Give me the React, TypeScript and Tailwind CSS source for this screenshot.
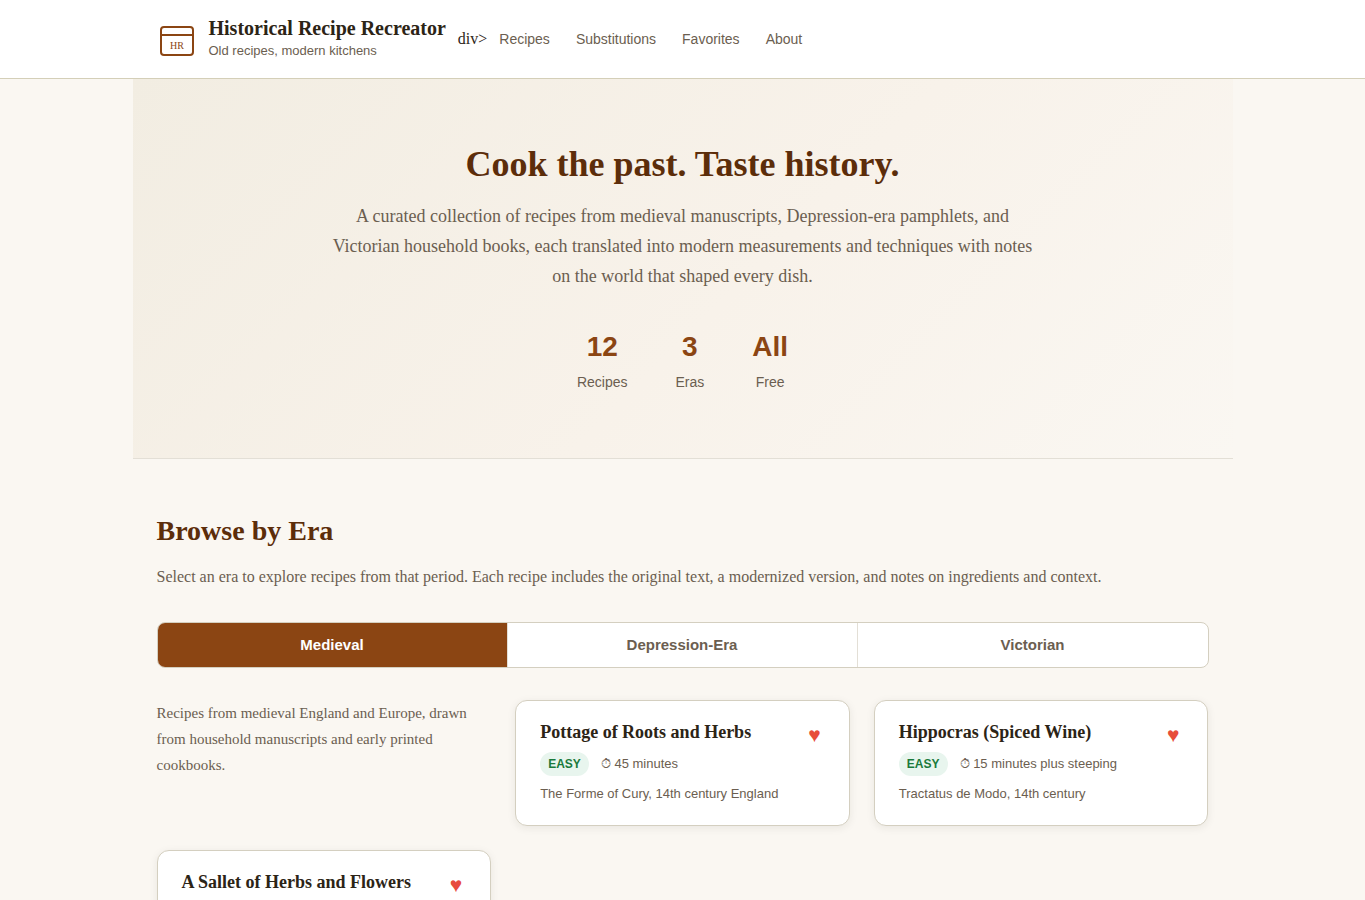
/**
 * Historical Recipe Recreator home page.
 *
 * Header, hero and the era browser with its recipe cards.
 */
import { useState } from 'react';

type Recipe = {
  title: string;
  difficulty: string;
  time: string;
  source: string;
};

const NAV_LINKS = ['Recipes', 'Substitutions', 'Favorites', 'About'];

const STATS = [
  { value: '12', label: 'Recipes' },
  { value: '3', label: 'Eras' },
  { value: 'All', label: 'Free' },
];

const ERAS = ['Medieval', 'Depression-Era', 'Victorian'];

const RECIPES: Recipe[] = [
  {
    title: 'Pottage of Roots and Herbs',
    difficulty: 'EASY',
    time: '45 minutes',
    source: 'The Forme of Cury, 14th century England',
  },
  {
    title: 'Hippocras (Spiced Wine)',
    difficulty: 'EASY',
    time: '15 minutes plus steeping',
    source: 'Tractatus de Modo, 14th century',
  },
  {
    title: 'A Sallet of Herbs and Flowers',
    difficulty: 'EASY',
    time: '20 minutes',
    source: 'The Forme of Cury, 14th century England',
  },
];

function Logo() {
  return (
    <svg width="40" height="40" viewBox="0 0 40 40" fill="none" aria-hidden="true">
      <rect x="4" y="8" width="32" height="28" rx="3" stroke="#8b4513" strokeWidth="2" />
      <path d="M4 16H36" stroke="#8b4513" strokeWidth="2" />
      <text
        x="20"
        y="30"
        textAnchor="middle"
        fontSize="10"
        fill="#8b4513"
        className="font-['Liberation_Serif',serif]"
      >
        HR
      </text>
    </svg>
  );
}

function Header() {
  return (
    <header className="border-b border-[#d4cfb8] bg-white">
      <div className="mx-auto flex max-w-[1100px] items-center gap-3 px-6 py-4">
        <Logo />
        <div>
          <div className="text-[20px] leading-[24px] font-bold">Historical Recipe Recreator</div>
          <div className="font-['Liberation_Sans',sans-serif] text-[13px] leading-[22px] text-[#6b5e50]">
            Old recipes, modern kitchens
          </div>
        </div>
        <span>div&gt;</span>
        <nav className="flex gap-[26px] font-['Liberation_Sans',sans-serif] text-[14px] text-[#6b5e50]">
          {NAV_LINKS.map((label) => (
            <a key={label} href={`#${label.toLowerCase()}`}>
              {label}
            </a>
          ))}
        </nav>
      </div>
    </header>
  );
}

function Hero() {
  return (
    <section className="mx-auto max-w-[1100px] border-b border-[#e3dfd6] bg-[linear-gradient(135deg,#f2ede2_0%,#f8f2ea_55%,#faf7f2_100%)] px-6 py-16 text-center">
      <h1 className="mb-[15px] text-[36px] leading-[43px] font-bold text-[#5c2d0a]">
        Cook the past. Taste history.
      </h1>
      <p className="mx-auto mb-8 max-w-[704px] text-[18px] leading-[30px] text-[#6b5e50]">
        A curated collection of recipes from medieval manuscripts, Depression-era pamphlets, and
        Victorian household books, each translated into modern measurements and techniques with
        notes on the world that shaped every dish.
      </p>
      <div className="flex justify-center gap-12 font-['Liberation_Sans',sans-serif]">
        {STATS.map(({ value, label }) => (
          <div key={label}>
            <div className="text-[28px] leading-[48px] font-bold text-[#8b4513]">{value}</div>
            <div className="text-[14px] leading-[23px] text-[#6b5e50]">{label}</div>
          </div>
        ))}
      </div>
    </section>
  );
}

function RecipeCard({ title, difficulty, time, source }: Recipe) {
  return (
    <article className="rounded-xl border border-[#d4cfc0] bg-white px-6 py-5 shadow-[0_2px_8px_rgba(44,36,22,0.08)]">
      <div className="mb-[3px] flex h-7 items-start justify-between">
        <h3 className="text-[18px] leading-[23px] font-bold">{title}</h3>
        <button
          type="button"
          aria-label={`Remove ${title} from favorites`}
          className="px-1 text-[21px] leading-[28px] text-[#e74c3c]"
        >
          ♥
        </button>
      </div>
      <div className="mb-[7px] flex items-center gap-3 font-['Liberation_Sans',sans-serif] text-[13px] leading-[24px] text-[#6b5e50]">
        <span className="rounded-full bg-[#e8f5ee] px-2 text-[12px] leading-[24px] font-bold text-[#1a7a3c]">
          {difficulty}
        </span>
        <span>⏱ {time}</span>
      </div>
      <p className="font-['Liberation_Sans',sans-serif] text-[13px] leading-[22px] text-[#6b5e50]">
        {source}
      </p>
    </article>
  );
}

function BrowseByEra() {
  const [era, setEra] = useState(ERAS[0]);

  return (
    <section className="mx-auto max-w-[1100px] px-6 py-12">
      <h2 className="mb-2 text-[28px] leading-[48px] font-bold text-[#5c2d0a]">Browse by Era</h2>
      <p className="mb-8 text-[16px] leading-[27px] text-[#6b5e50]">
        Select an era to explore recipes from that period. Each recipe includes the original text, a
        modernized version, and notes on ingredients and context.
      </p>
      <div
        role="tablist"
        className="mb-8 grid grid-cols-3 divide-x divide-[#e3dfd6] overflow-hidden rounded-lg border border-[#d4cfc0] bg-white font-['Liberation_Sans',sans-serif]"
      >
        {ERAS.map((name) => (
          <button
            key={name}
            type="button"
            role="tab"
            aria-selected={name === era}
            onClick={() => setEra(name)}
            className={`h-11 text-[15px] font-bold ${
              name === era ? 'bg-[#8b4513] text-white' : 'text-[#6b5e50]'
            }`}
          >
            {name}
          </button>
        ))}
      </div>
      <div className="grid grid-cols-3 gap-6">
        <p className="text-[15px] leading-[26px] text-[#6b5e50]">
          Recipes from medieval England and Europe, drawn from household manuscripts and early
          printed cookbooks.
        </p>
        {RECIPES.map((recipe) => (
          <RecipeCard key={recipe.title} {...recipe} />
        ))}
      </div>
    </section>
  );
}

export default function App() {
  return (
    <div className="min-h-screen bg-[#faf7f2] font-['Liberation_Serif',serif] text-[#2c2416]">
      <Header />
      <main>
        <Hero />
        <BrowseByEra />
      </main>
    </div>
  );
}
